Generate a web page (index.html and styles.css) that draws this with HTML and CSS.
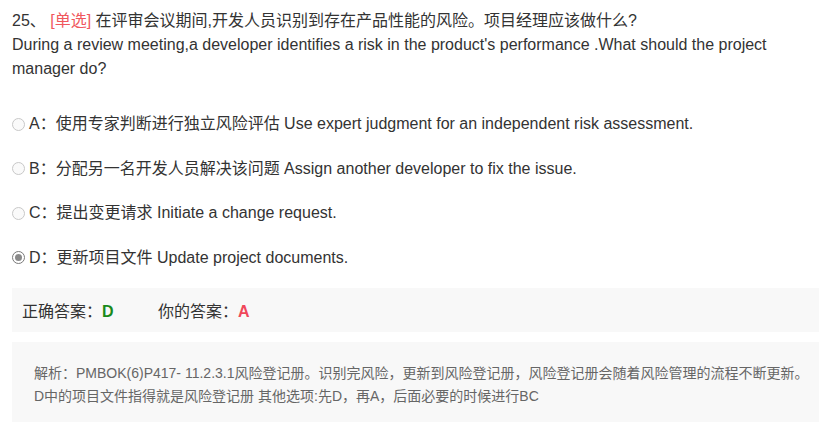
FILE: index.html
```html
<!DOCTYPE html>
<html lang="zh-CN">
<head>
<meta charset="utf-8">
<link rel="stylesheet" href="styles.css">
</head>
<body>
<div class="question">
  <div class="title">25、 <span class="tag">[单选]</span> 在评审会议期间,开发人员识别到存在产品性能的风险。项目经理应该做什么?<br>During a review meeting,a developer identifies a risk in the product's performance .What should the project manager do?</div>
  <ul class="options">
    <li class="option"><span class="radio"></span>A：使用专家判断进行独立风险评估 Use expert judgment for an independent risk assessment.</li>
    <li class="option"><span class="radio"></span>B：分配另一名开发人员解决该问题 Assign another developer to fix the issue.</li>
    <li class="option"><span class="radio"></span>C：提出变更请求 Initiate a change request.</li>
    <li class="option"><span class="radio checked"></span>D：更新项目文件 Update project documents.</li>
  </ul>
  <div class="answer">
    <span class="ans-item">正确答案：<b class="right">D</b></span>
    <span class="ans-item">你的答案：<b class="wrong">A</b></span>
  </div>
  <div class="analysis">解析：PMBOK(6)P417- 11.2.3.1风险登记册。识别完风险，更新到风险登记册，风险登记册会随着风险管理的流程不断更新。<br>D中的项目文件指得就是风险登记册 其他选项:先D，再A，后面必要的时候进行BC</div>
</div>
</body>
</html>
```

FILE: styles.css
```css
html, body {
  margin: 0;
  padding: 0;
  background: #fff;
}
body {
  font-family: "Liberation Sans", "Noto Sans CJK SC", sans-serif;
  color: #333;
}
.question {
  padding: 9px 0 0 12px;
}
.title {
  font-size: 16px;
  line-height: 24px;
  color: #333;
}
.tag {
  color: #f0575d;
}
.options {
  list-style: none;
  margin: 31px 0 0 0;
  padding: 0;
}
.option {
  display: flex;
  align-items: center;
  font-size: 16px;
  line-height: 24px;
  height: 24px;
  margin-bottom: 20.5px;
  color: #333;
}
.option:last-child {
  margin-bottom: 18px;
}
.radio {
  width: 11px;
  height: 11px;
  border: 1px solid #c8c8c8;
  border-radius: 50%;
  background: #fafafa;
  margin-right: 4px;
  box-sizing: content-box;
  display: inline-flex;
  align-items: center;
  justify-content: center;
  flex: none;
}
.radio.checked {
  border-color: #7a7a7a;
  background: #fff;
}
.radio.checked::after {
  content: "";
  width: 7px;
  height: 7px;
  border-radius: 50%;
  background: #8a8a8a;
}
.answer {
  background: #f8f8f8;
  height: 44px;
  display: flex;
  align-items: center;
  padding-left: 10px;
  font-size: 16px;
  color: #333;
}
.ans-item {
  width: 136px;
}
.right {
  color: #1a8a1a;
  font-weight: bold;
}
.wrong {
  color: #f0475a;
  font-weight: bold;
}
.analysis {
  margin-top: 10px;
  background: #f8f8f8;
  padding: 20px 0 30px 22px;
  font-size: 14px;
  line-height: 23px;
  color: #666;
}
```
